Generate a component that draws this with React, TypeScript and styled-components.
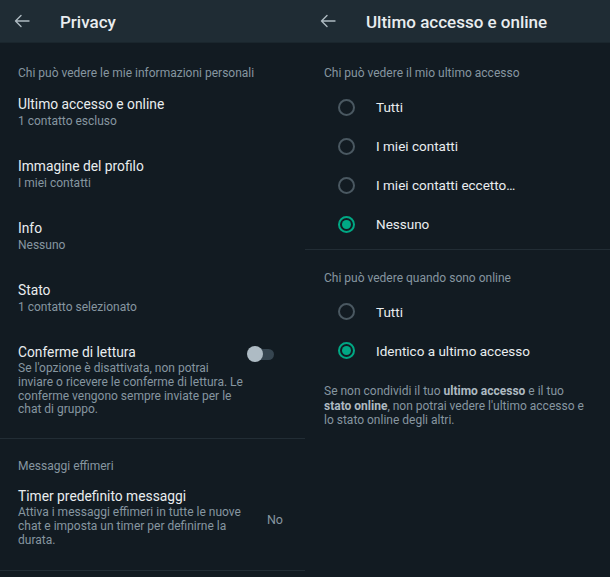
import React from "react";
import styled, { createGlobalStyle } from "styled-components";

const Global = createGlobalStyle`
  html, body { margin: 0; padding: 0; background: #121b22; }
  body { font-family: Roboto, "Noto Sans", "Liberation Sans", sans-serif; -webkit-font-smoothing: antialiased; }
  * { box-sizing: border-box; }
`;

const Page = styled.div`
  width: 610px;
  height: 577px;
  display: grid;
  grid-template-columns: 305px 305px;
  background: #121b22;
  overflow: hidden;
`;

const Panel = styled.div`
  display: flex;
  flex-direction: column;
  min-width: 0;
`;

const Header = styled.div<{ $pad: number }>`
  height: 42px;
  flex: none;
  display: flex;
  align-items: center;
  padding-left: ${(p) => p.$pad}px;
  gap: 30px;
  background: #1f2c34;
  box-shadow: 0 1px 0 #1a262d;
`;

const Title = styled.div`
  color: #e9edef;
  font-size: 17px;
  font-weight: 500;
  line-height: 22px;
  margin-top: 1px;
`;

const Section = styled.div<{ $top: number; $bottom: number; $divider?: boolean }>`
  padding-top: ${(p) => p.$top}px;
  padding-bottom: ${(p) => p.$bottom}px;
  border-bottom: ${(p) => (p.$divider ? "1px solid #222d35" : "none")};
`;

const SectionLabel = styled.div<{ $pad: number }>`
  color: #8696a0;
  font-size: 12px;
  line-height: 16px;
  padding-left: ${(p) => p.$pad}px;
`;

const Item = styled.div<{ $pt?: number; $pb?: number }>`
  display: flex;
  align-items: flex-start;
  padding: ${(p) => p.$pt ?? 14}px 22px ${(p) => p.$pb ?? 14}px 18px;
  gap: 4px;
`;

const ItemText = styled.div`
  flex: 1;
  min-width: 0;
`;

const ItemTitle = styled.div`
  color: #e9edef;
  font-size: 13.8px;
  line-height: 18px;
`;

const ItemSub = styled.div`
  color: #8696a0;
  font-size: 12px;
  line-height: 16px;
`;

const ItemDesc = styled.div`
  color: #8696a0;
  font-size: 12px;
  line-height: 13.8px;
  margin-top: 1px;
`;

const Value = styled.div`
  color: #8696a0;
  font-size: 12.5px;
  margin-left: 16px;
  margin-top: 25px;
`;

const Toggle = styled.div`
  position: relative;
  width: 27px;
  height: 16px;
  margin-right: 9px;
  margin-top: 3px;
  flex: none;
`;

const Track = styled.div`
  position: absolute;
  left: 8px;
  right: 0;
  top: 2.5px;
  height: 11px;
  border-radius: 6px;
  background: #364550;
`;

const Thumb = styled.div`
  position: absolute;
  left: 0;
  top: 0;
  width: 16px;
  height: 16px;
  border-radius: 50%;
  background: #aebbc4;
`;

const RadioList = styled.div`
  display: flex;
  flex-direction: column;
  margin-top: 6.5px;
`;

const RadioRow = styled.div`
  height: 39px;
  display: flex;
  align-items: center;
  padding-left: 33px;
  gap: 21px;
`;

const Radio = styled.div<{ $on?: boolean }>`
  width: 17px;
  height: 17px;
  border-radius: 50%;
  border: 2px solid ${(p) => (p.$on ? "#00a884" : "#4a5861")};
  display: flex;
  align-items: center;
  justify-content: center;
  flex: none;
  &::after {
    content: "";
    display: ${(p) => (p.$on ? "block" : "none")};
    width: 9px;
    height: 9px;
    border-radius: 50%;
    background: #00a884;
  }
`;

const RadioLabel = styled.div`
  color: #e9edef;
  font-size: 13.5px;
  line-height: 18px;
`;

const Note = styled.div`
  color: #8696a0;
  font-size: 12px;
  line-height: 14.5px;
  padding: 14px 22px 0 19px;
  b {
    color: #aebac1;
    font-weight: 700;
    line-height: 14.5px;
  }
`;

const BackArrow = () => (
  <svg width="16" height="16" viewBox="0 0 16 16" fill="none">
    <path d="M15 8H1.5M7 2.5L1.5 8 7 13.5" stroke="#aebac1" strokeWidth="1.4" strokeLinecap="round" strokeLinejoin="round" />
  </svg>
);

export default function App() {
  return (
    <>
      <Global />
      <Page>
        <Panel>
          <Header $pad={14}>
            <BackArrow />
            <Title>Privacy</Title>
          </Header>
          <Section $top={23} $bottom={7} $divider>
            <SectionLabel $pad={18}>Chi può vedere le mie informazioni personali</SectionLabel>
            <Item>
              <ItemText>
                <ItemTitle>Ultimo accesso e online</ItemTitle>
                <ItemSub>1 contatto escluso</ItemSub>
              </ItemText>
            </Item>
            <Item>
              <ItemText>
                <ItemTitle>Immagine del profilo</ItemTitle>
                <ItemSub>I miei contatti</ItemSub>
              </ItemText>
            </Item>
            <Item>
              <ItemText>
                <ItemTitle>Info</ItemTitle>
                <ItemSub>Nessuno</ItemSub>
              </ItemText>
            </Item>
            <Item>
              <ItemText>
                <ItemTitle>Stato</ItemTitle>
                <ItemSub>1 contatto selezionato</ItemSub>
              </ItemText>
            </Item>
            <Item>
              <ItemText>
                <ItemTitle>Conferme di lettura</ItemTitle>
                <ItemDesc>
                  Se l'opzione è disattivata, non potrai inviare o ricevere le conferme di lettura. Le conferme vengono sempre inviate per le chat di gruppo.
                </ItemDesc>
              </ItemText>
              <Toggle>
                <Track />
                <Thumb />
              </Toggle>
            </Item>
          </Section>
          <Section $top={19} $bottom={8} $divider>
            <SectionLabel $pad={18}>Messaggi effimeri</SectionLabel>
            <Item $pt={13}>
              <ItemText>
                <ItemTitle>Timer predefinito messaggi</ItemTitle>
                <ItemDesc>
                  Attiva i messaggi effimeri in tutte le nuove chat e imposta un timer per definirne la durata.
                </ItemDesc>
              </ItemText>
              <Value>No</Value>
            </Item>
          </Section>
        </Panel>
        <Panel>
          <Header $pad={15}>
            <BackArrow />
            <Title>Ultimo accesso e online</Title>
          </Header>
          <Section $top={23} $bottom={5} $divider>
            <SectionLabel $pad={19}>Chi può vedere il mio ultimo accesso</SectionLabel>
            <RadioList>
              <RadioRow>
                <Radio />
                <RadioLabel>Tutti</RadioLabel>
              </RadioRow>
              <RadioRow>
                <Radio />
                <RadioLabel>I miei contatti</RadioLabel>
              </RadioRow>
              <RadioRow>
                <Radio />
                <RadioLabel>I miei contatti eccetto…</RadioLabel>
              </RadioRow>
              <RadioRow>
                <Radio $on />
                <RadioLabel>Nessuno</RadioLabel>
              </RadioRow>
            </RadioList>
          </Section>
          <Section $top={20} $bottom={0}>
            <SectionLabel $pad={19}>Chi può vedere quando sono online</SectionLabel>
            <RadioList>
              <RadioRow>
                <Radio />
                <RadioLabel>Tutti</RadioLabel>
              </RadioRow>
              <RadioRow>
                <Radio $on />
                <RadioLabel>Identico a ultimo accesso</RadioLabel>
              </RadioRow>
            </RadioList>
            <Note>
              Se non condividi il tuo <b>ultimo accesso</b> e il tuo <b>stato online</b>, non potrai vedere l'ultimo accesso e lo stato online degli altri.
            </Note>
          </Section>
        </Panel>
      </Page>
    </>
  );
}
